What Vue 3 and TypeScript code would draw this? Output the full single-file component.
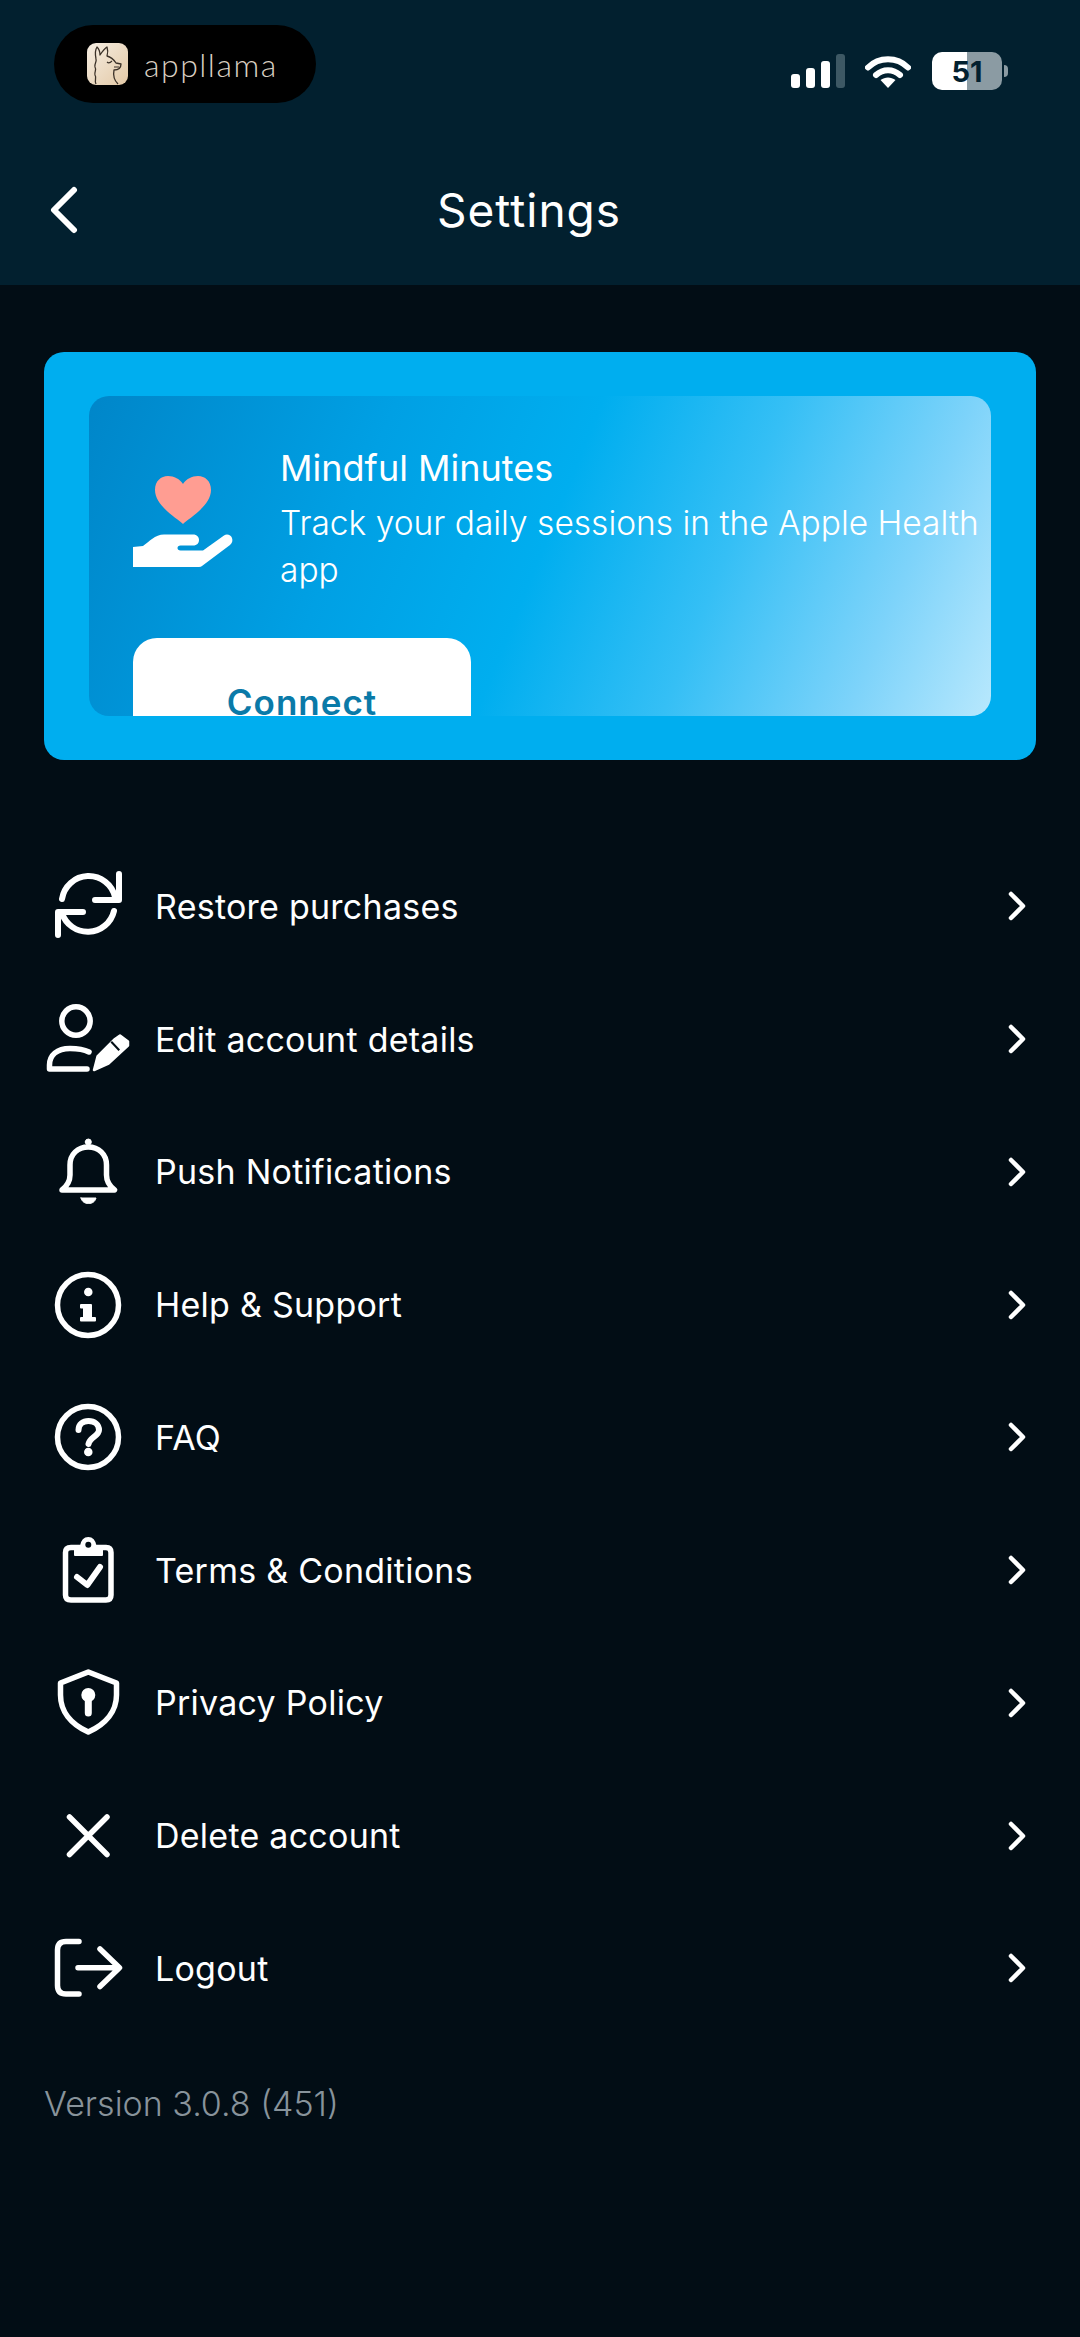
<script setup lang="ts">
interface Shape {
  d: string
  fill?: string
  width?: number
}

const circle = (x: number, y: number, r: number) =>
  `M${x - r} ${y}a${r} ${r} 0 1 0 ${r * 2} 0a${r} ${r} 0 1 0 ${-r * 2} 0Z`

const rows: { label: string; icon: Shape[] }[] = [
  {
    label: 'Restore purchases',
    icon: [
      {
        d: 'M18 37A27 27 0 0 1 71 35M75 12V38H51M14 73V50H39M70 49A27 27 0 0 1 18 51',
        width: 6
      }
    ]
  },
  {
    label: 'Edit account details',
    icon: [
      { d: circle(32, 26, 14.2) },
      { d: 'M45 57C40 54.500 33 53.500 26 53.500C13 53.500 5.500 60 5.500 70V74H43' },
      {
        d: 'M50 75L53.500 61.500L71 44L76 40.500L84 46.500V50.500L64.500 68.500Z',
        fill: '#fff',
        width: 2.5
      },
      { d: 'M66.500 47.500L68 46L76 54.500L74.500 56Z', fill: '#020d15', width: 0 }
    ]
  },
  {
    label: 'Push Notifications',
    icon: [
      { d: 'M18 62C23 58 26 54 26 47V37C26 26 34 19 44.300 19C54.500 19 62.500 26 62.500 37V47C62.500 54 65.500 58 70.500 62Z' },
      { d: circle(44.3, 14, 3), fill: '#fff', width: 1 },
      { d: 'M37 70H52C51 74 48 75.500 44.500 75.500C41 75.500 38 74 37 70Z', fill: '#fff', width: 1 }
    ]
  },
  {
    label: 'Help & Support',
    icon: [
      { d: circle(44, 44, 30.5) },
      { d: circle(44.3, 31, 3.500), fill: '#fff', width: 1.500 },
      { d: 'M37 44H47V57H51V59.500H37V57H40V46.500H37Z', fill: '#fff', width: 2 }
    ]
  },
  {
    label: 'FAQ',
    icon: [
      { d: circle(44, 44, 30.5) },
      { d: 'M34.500 37C34.500 31 39 28 44.500 28C50.500 28 55 31.500 55 37C55 43 46 44 44.500 51', width: 6 },
      { d: circle(44.3, 59, 3.5), fill: '#fff', width: 1.500 }
    ]
  },
  {
    label: 'Terms & Conditions',
    icon: [
      { d: 'M27 21.500H62Q67 21.500 67 26.500V69Q67 74 62 74H27Q21.500 74 21.500 69V26.500Q21.500 21.500 27 21.500Z' },
      { d: 'M31 20H37C38 14 40.500 12 44.300 12C48 12 50.500 14 51.500 20H58V29H31Z', fill: '#fff', width: 2 },
      { d: circle(44.3, 18.7, 3), fill: '#020d15', width: 0 },
      { d: 'M33 51L43.300 59L56 41', width: 6 }
    ]
  },
  {
    label: 'Privacy Policy',
    icon: [
      { d: 'M44.300 13L72.500 24V36C72.500 52 62 65 44.300 73C26.500 65 16.500 52 16.500 36V24Z' },
      { d: circle(44.3, 36, 5.500), fill: '#fff', width: 3 },
      { d: 'M44.300 38V54', width: 7 }
    ]
  },
  {
    label: 'Delete account',
    icon: [{ d: 'M25.500 25L63 62.500M63 25L25.500 62.500', width: 5.500 }]
  },
  {
    label: 'Logout',
    icon: [
      { d: 'M35 17.500H22Q13.500 17.500 13.500 26V61.500Q13.500 70 22 70H35' },
      { d: 'M34 43.700H75M56 25L75.500 43.700L56 62.500' }
    ]
  }
]
</script>

<template>
  <div class="page">
    <header class="top">
      <div class="status">
        <div class="pill">
          <svg class="llama" viewBox="0 0 41 42">
            <defs>
              <linearGradient id="tile" x1="0" y1="0" x2="1" y2="1">
                <stop offset="0" stop-color="#f6eee3" />
                <stop offset="1" stop-color="#e3c9a6" />
              </linearGradient>
            </defs>
            <rect width="41" height="42" rx="9" fill="url(#tile)" />
            <path
              d="M9 41C7 37 10 35 8 32C7 29 10 27 8 24C7 21 10 19 9 16C8 11 8 7 10 4C12 6 13 9 13 12C15 9 17 6 20 4C21 7 21 10 20 13C24 14 27 17 29 20L34 21C34 25 31 27 27 27C26 32 27 37 31 41"
              fill="none"
              stroke="#3b3128"
              stroke-width="1.300"
              stroke-linejoin="round"
            />
            <path d="M20 19Q22 21 25 18M27 24L32 24" fill="none" stroke="#3b3128" stroke-width="1.100" />
          </svg>
          <span class="brand">appllama</span>
        </div>
        <div class="indicators">
          <svg class="signal" viewBox="0 0 54 34">
            <rect x="0" y="20" width="9" height="14" rx="3" fill="#fff" />
            <rect x="15" y="14" width="9" height="20" rx="3" fill="#fff" />
            <rect x="30" y="7" width="9" height="27" rx="3" fill="#fff" />
            <rect x="45" y="0" width="9" height="34" rx="3" fill="#3d5864" />
          </svg>
          <svg class="wifi" viewBox="0 0 46 34">
            <path
              d="M3 13.500C14 2.500 32 2.500 43 13.500M11 21C18 14.500 28 14.500 35 21"
              fill="none"
              stroke="#fff"
              stroke-width="6"
              stroke-linecap="round"
            />
            <path d="M23 34L15.500 26C20 22.500 26 22.500 30.500 26Z" fill="#fff" />
          </svg>
          <div class="battery">
            <span class="battery-level">51</span>
          </div>
          <span class="battery-nub" />
        </div>
      </div>
      <div class="nav">
        <svg class="back" viewBox="0 0 30 48">
          <path
            d="M26 4L6 24L26 44"
            fill="none"
            stroke="#fff"
            stroke-width="6"
            stroke-linecap="round"
            stroke-linejoin="round"
          />
        </svg>
        <h1 class="title">Settings</h1>
      </div>
    </header>

    <main class="content">
      <section class="promo">
        <div class="promo-inner">
          <div class="promo-row">
            <svg class="promo-icon" viewBox="0 0 100 92">
              <path
                d="M50 48C45 43 22 30 22 14C22 5 28 0 35 0C41 0 47 3 50 8C53 3 59 0 65 0C72 0 78 5 78 14C78 30 55 43 50 48Z"
                fill="#ff9d92"
              />
              <path
                d="M0 71L10 70C16 66 22 58.500 31 58.500H60C64 58.500 66 61 66 64C66 67 64 69.500 60 69.500H47.500C45.500 69.500 44.500 70.500 44.500 72C44.500 73.500 45.500 74.500 47.500 74.500H70L91 59.500C94 57.500 98 59 99 62C100 65 99 67 97 69L69 90Q68 91 66 91H0Z"
                fill="#fff"
              />
            </svg>
            <div class="promo-text">
              <div class="promo-title">Mindful Minutes</div>
              <div class="promo-sub">Track your daily sessions in the Apple Health app</div>
            </div>
          </div>
          <button type="button" class="connect">Connect</button>
        </div>
      </section>

      <ul class="menu">
        <li v-for="row in rows" :key="row.label" class="menu-row">
          <svg class="menu-icon" viewBox="0 0 88 88">
            <path
              v-for="(shape, i) in row.icon"
              :key="i"
              :d="shape.d"
              :fill="shape.fill ?? 'none'"
              :stroke="shape.width === 0 ? 'none' : '#fff'"
              :stroke-width="shape.width ?? 5.5"
              stroke-linecap="round"
              stroke-linejoin="round"
            />
          </svg>
          <span class="menu-label">{{ row.label }}</span>
          <svg class="chevron" viewBox="0 0 20 30">
            <path
              d="M4 3L16 15L4 27"
              fill="none"
              stroke="#fff"
              stroke-width="4.500"
              stroke-linecap="round"
              stroke-linejoin="round"
            />
          </svg>
        </li>
      </ul>

      <p class="version">Version 3.0.8 (451)</p>
    </main>
  </div>
</template>

<style scoped>
.page {
  min-height: 2337px;
  background: #020d15;
  color: #fff;
  font-family: Inter, "Liberation Sans", sans-serif;
}

.top {
  height: 285px;
  background: #02202f;
}

.status {
  display: flex;
  align-items: flex-start;
  justify-content: space-between;
  padding: 25px 72px 0 54px;
}

.pill {
  display: flex;
  align-items: center;
  width: 262px;
  height: 78px;
  box-sizing: border-box;
  padding-left: 33px;
  gap: 16px;
  border-radius: 39px;
  background: #000;
}

.llama {
  width: 41px;
  height: 42px;
}

.brand {
  font-family: Lato, sans-serif;
  font-size: 32px;
  font-weight: 300;
  color: #d9cfc2;
  letter-spacing: 1.5px;
}

.indicators {
  display: flex;
  align-items: center;
  padding-top: 27px;
}

.signal {
  width: 54px;
  height: 34px;
  margin-right: 20px;
}

.wifi {
  width: 46px;
  height: 34px;
  margin-right: 21px;
}

.battery {
  display: flex;
  align-items: center;
  justify-content: center;
  width: 70px;
  height: 38px;
  border-radius: 10px;
  background: linear-gradient(90deg, #fff 50%, #8b9ba3 50%);
}

.battery-level {
  font-size: 29px;
  font-weight: 700;
  color: #02202f;
}

.battery-nub {
  width: 4px;
  height: 12px;
  margin-left: 2px;
  border-radius: 0 6px 6px 0;
  background: #8b9ba3;
}

.nav {
  position: relative;
  display: flex;
  align-items: center;
  justify-content: center;
  height: 70px;
  margin-top: 72px;
}

.back {
  position: absolute;
  left: 48px;
  top: 11px;
  width: 30px;
  height: 48px;
}

.title {
  margin: 0 22px 0 0;
  font-size: 46px;
  font-weight: 400;
  letter-spacing: 1px;
  line-height: 70px;
}

.content {
  padding-top: 67px;
}

.promo {
  box-sizing: border-box;
  width: 992px;
  height: 408px;
  margin-left: 44px;
  padding: 44px 45px;
  border-radius: 20px;
  background: #00aeef;
}

.promo-inner {
  height: 320px;
  border-radius: 20px;
  overflow: hidden;
  background: linear-gradient(112deg, #0086c9 0%, #00a0e4 30%, #00aeef 50%, #35bff5 68%, #7dd3fa 86%, #b8e8fd 100%);
}

.promo-row {
  display: flex;
  align-items: center;
  gap: 47px;
  padding: 50px 0 0 44px;
}

.promo-icon {
  flex: none;
  width: 100px;
  height: 92px;
  margin-top: 3px;
}

.promo-text {
  width: 704px;
}

.promo-title {
  font-size: 36px;
  font-weight: 400;
  line-height: 44px;
}

.promo-sub {
  margin-top: 10px;
  font-size: 33.5px;
  font-weight: 300;
  line-height: 47px;
}

.connect {
  display: block;
  box-sizing: border-box;
  width: 338px;
  height: 128px;
  margin: 44px 0 0 44px;
  padding: 0;
  border: none;
  border-radius: 24px 24px 0 0;
  background: #fff;
  color: #0a7aa8;
  font-family: inherit;
  font-size: 35px;
  font-weight: 600;
  letter-spacing: 1px;
}

.menu {
  margin: 0;
  padding: 80px 0 0;
  list-style: none;
}

.menu-row {
  display: flex;
  align-items: center;
  height: 132.75px;
  padding: 0 53px 0 44px;
}

.menu-icon {
  flex: none;
  width: 88px;
  height: 88px;
  margin-right: 23px;
}

.menu-label {
  flex: 1;
  font-size: 34px;
  font-weight: 400;
  letter-spacing: 0.25px;
}

.chevron {
  width: 20px;
  height: 30px;
}

.version {
  margin: 46px 0 0 44px;
  font-size: 34px;
  font-weight: 300;
  line-height: 46px;
  color: #88939b;
}
</style>

<style>
html,
body {
  background: #020d15;
}
</style>
